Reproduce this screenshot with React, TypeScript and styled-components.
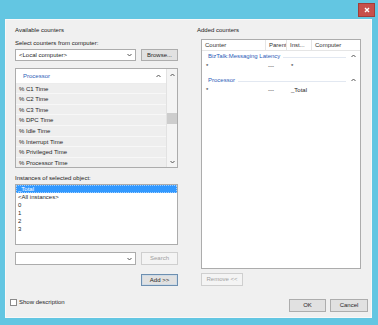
import styled, { createGlobalStyle, css } from 'styled-components'
import type { FC, ReactNode } from 'react'

const GlobalStyle = createGlobalStyle`
  html, body {
    margin: 0;
    padding: 0;
    background: #63c6e2;
  }
  body {
    font-family: "Liberation Sans", Arial, sans-serif;
    font-size: 6px;
    color: #1f1f1f;
  }
  * {
    box-sizing: border-box;
  }
`

const Window = styled.div`
  width: 378px;
  height: 325px;
  background: #63c6e2;
  display: flex;
  flex-direction: column;
  overflow: hidden;
`

const TitleBar = styled.div`
  height: 19px;
  display: flex;
  align-items: flex-start;
`

const Caption = styled.span<{ offset: number }>`
  margin-left: ${({ offset }) => offset}px;
  margin-top: -6px;
  font-size: 7px;
  line-height: 8px;
  color: #2e2e2e;
  white-space: nowrap;
`

const CloseButton = styled.div`
  margin: 3px 3px 0 auto;
  width: 17px;
  height: 14px;
  background: #c7504b;
  border: 1px solid #a23d39;
  display: flex;
  align-items: center;
  justify-content: center;
`

const Body = styled.div`
  height: 299px;
  margin: 0 6px 0 5px;
  background: #f0f0f0;
  box-shadow: inset 0 0 0 1px #f8f8f8;
  padding: 7px 4px 0 5px;
  display: flex;
  flex-direction: column;
`

const Main = styled.div`
  display: flex;
  gap: 19px;
  margin-left: 5px;
`

const Column = styled.div<{ width: number }>`
  width: ${({ width }) => width}px;
  display: flex;
  flex-direction: column;
`

const Label = styled.div<{ top?: number }>`
  margin-top: ${({ top = 0 }) => top}px;
  height: 8px;
  line-height: 8px;
  white-space: nowrap;
  color: #222;
`

const Row = styled.div<{ top?: number }>`
  display: flex;
  gap: 5px;
  margin-top: ${({ top = 0 }) => top}px;
`

const Combo = styled.div<{ height: number }>`
  width: 121px;
  height: ${({ height }) => height}px;
  border: 1px solid #acacac;
  background: #fff;
  display: flex;
  align-items: center;
  justify-content: space-between;
  padding: 0 3px 0 3px;
  white-space: nowrap;
`

const Button = styled.div<{
  width: number
  height: number
  variant?: 'normal' | 'disabled' | 'default'
}>`
  width: ${({ width }) => width}px;
  height: ${({ height }) => height}px;
  line-height: ${({ height }) => height - 2}px;
  text-align: center;
  white-space: nowrap;
  background: #e1e1e1;
  border: 1px solid #adadad;
  color: #1f1f1f;

  ${({ variant }) =>
    variant === 'disabled' &&
    css`
      background: #f4f4f4;
      border-color: #cfcfcf;
      color: #a0a0a0;
    `}

  ${({ variant }) =>
    variant === 'default' &&
    css`
      border-color: #6d8fb0;
      box-shadow: inset 0 0 0 1px #cfdbe6;
    `}
`

const CounterList = styled.div`
  margin-top: 7px;
  height: 100px;
  border: 1px solid #acacac;
  background: #fff;
  display: flex;
  overflow: hidden;
`

const ListArea = styled.div`
  flex: 1;
  display: flex;
  flex-direction: column;
  overflow: hidden;
`

const ObjectHeader = styled.div`
  flex: none;
  height: 14.5px;
  display: flex;
  align-items: center;
  padding: 0 5px 0 7px;
  color: #2b5cb8;
  border-bottom: 1px solid #ececec;
`

const Spacer = styled.div`
  flex: 1;
`

const CounterRow = styled.div`
  flex: none;
  height: 10.65px;
  line-height: 10.65px;
  padding-left: 3px;
  background: #eeeeee;
  box-shadow: inset 0 -1px 0 #f7f7f7;
  white-space: nowrap;
`

const Scrollbar = styled.div`
  width: 11px;
  border-left: 1px solid #e2e2e2;
  background: #f4f4f4;
  display: flex;
  flex-direction: column;
`

const ScrollArrow = styled.div`
  height: 11px;
  display: flex;
  align-items: center;
  justify-content: center;
`

const Track = styled.div`
  flex: 1;
`

const Thumb = styled.div`
  margin-top: 33px;
  height: 11px;
  background: #cdcdcd;
`

const InstanceBox = styled.div`
  margin-top: 2px;
  height: 61px;
  border: 1px solid #acacac;
  background: #fff;
  padding-top: 0;
`

const InstanceRow = styled.div<{ selected?: boolean }>`
  height: 8px;
  line-height: 8px;
  padding-left: 2px;
  white-space: nowrap;

  ${({ selected }) =>
    selected &&
    css`
      background: #3399ff;
      color: #fff;
      outline: 1px dotted #9fcfff;
      outline-offset: -1px;
    `}
`

const AddRow = styled.div`
  margin-top: 9px;
  display: flex;
  justify-content: flex-end;
`

const AddedBox = styled.div`
  margin: 5px 0 0 4px;
  width: 160px;
  height: 230px;
  border: 1px solid #acacac;
  background: #fff;
`

const Columns = styled.div`
  display: grid;
  grid-template-columns: 64px 21px 25px 1fr;
`

const HeaderRow = styled(Columns)`
  height: 11px;
  border-bottom: 1px solid #e5e5e5;
`

const HeaderCell = styled.div`
  line-height: 10px;
  padding-left: 3px;
  border-right: 1px solid #e5e5e5;
  white-space: nowrap;
  overflow: hidden;
  color: #333;

  &:last-child {
    border-right: none;
  }
`

const GroupHeader = styled.div<{ top?: number }>`
  margin-top: ${({ top = 0 }) => top}px;
  height: 10px;
  display: flex;
  align-items: center;
  padding: 0 4px 0 6px;
  color: #2b5cb8;
  white-space: nowrap;
`

const GroupLine = styled.div`
  flex: 1;
  height: 1px;
  margin: 3px 5px 0 3px;
  background: #e2e8f1;
`

const DataRow = styled(Columns)`
  height: 10px;
  line-height: 10px;
`

const Cell = styled.div<{ pad: number }>`
  padding-left: ${({ pad }) => pad}px;
  white-space: nowrap;
`

const RemoveRow = styled.div`
  margin: 4px 0 0 4px;
`

const BottomRow = styled.div`
  margin-top: 13px;
  display: flex;
  align-items: flex-start;
`

const CheckField = styled.label`
  display: flex;
  align-items: center;
  gap: 2px;
  height: 7px;
  line-height: 7px;
`

const CheckBox = styled.span`
  width: 7px;
  height: 7px;
  border: 1px solid #8a8a8a;
  background: #fff;
`

const DialogButtons = styled.div`
  margin-left: auto;
  display: flex;
  gap: 4px;
`

const Chevron: FC<{ up?: boolean }> = ({ up }) => (
  <svg width="5" height="4" viewBox="0 0 5 4">
    <polyline
      points={up ? '0.5,3 2.5,1 4.5,3' : '0.5,1 2.5,3 4.5,1'}
      fill="none"
      stroke="#555"
      strokeWidth="1"
    />
  </svg>
)

const CloseGlyph = () => (
  <svg width="6" height="6" viewBox="0 0 6 6">
    <path d="M1 1 L5 5 M5 1 L1 5" stroke="#fff" strokeWidth="1.4" />
  </svg>
)

const counters = [
  '% C1 Time',
  '% C2 Time',
  '% C3 Time',
  '% DPC Time',
  '% Idle Time',
  '% Interrupt Time',
  '% Privileged Time',
  '% Processor Time',
]

const instances = ['_Total', '<All instances>', '0', '1', '2', '3']

const added: Array<{ group: string; rows: Array<[string, string, string, string]> }> = [
  { group: 'BizTalk:Messaging Latency', rows: [['*', '---', '*', '']] },
  { group: 'Processor', rows: [['*', '---', '_Total', '']] },
]

const cellPads = [4, 2, 4, 3]

const DropCombo: FC<{ height: number; children?: ReactNode }> = ({ height, children }) => (
  <Combo height={height}>
    <span>{children}</span>
    <Chevron />
  </Combo>
)

export default function App() {
  return (
    <Window>
      <GlobalStyle />
      <TitleBar>
        <Caption offset={2}>Performance Monitor</Caption>
        <Caption offset={40}>Add Counters</Caption>
        <CloseButton>
          <CloseGlyph />
        </CloseButton>
      </TitleBar>

      <Body>
        <Main>
          <Column width={163}>
            <Label>Available counters</Label>
            <Label top={5}>Select counters from computer:</Label>
            <Row top={2}>
              <DropCombo height={12}>&lt;Local computer&gt;</DropCombo>
              <Button width={37} height={12}>
                Browse...
              </Button>
            </Row>

            <CounterList>
              <ListArea>
                <ObjectHeader>
                  Processor
                  <Spacer />
                  <Chevron up />
                </ObjectHeader>
                {counters.map((name) => (
                  <CounterRow key={name}>{name}</CounterRow>
                ))}
              </ListArea>
              <Scrollbar>
                <ScrollArrow>
                  <Chevron up />
                </ScrollArrow>
                <Track>
                  <Thumb />
                </Track>
                <ScrollArrow>
                  <Chevron />
                </ScrollArrow>
              </Scrollbar>
            </CounterList>

            <Label top={6}>Instances of selected object:</Label>
            <InstanceBox>
              {instances.map((name, i) => (
                <InstanceRow key={name} selected={i === 0}>
                  {name}
                </InstanceRow>
              ))}
            </InstanceBox>

            <Row top={7}>
              <DropCombo height={13} />
              <Button width={37} height={13} variant="disabled">
                Search
              </Button>
            </Row>

            <AddRow>
              <Button width={37} height={12} variant="default">
                Add &gt;&gt;
              </Button>
            </AddRow>
          </Column>

          <Column width={165}>
            <Label>Added counters</Label>
            <AddedBox>
              <HeaderRow>
                <HeaderCell>Counter</HeaderCell>
                <HeaderCell>Parent</HeaderCell>
                <HeaderCell>Inst...</HeaderCell>
                <HeaderCell>Computer</HeaderCell>
              </HeaderRow>
              {added.map(({ group, rows }, gi) => (
                <div key={group}>
                  <GroupHeader top={gi === 0 ? 0 : 4}>
                    {group}
                    <GroupLine />
                    <Chevron up />
                  </GroupHeader>
                  {rows.map((row, ri) => (
                    <DataRow key={ri}>
                      {row.map((value, ci) => (
                        <Cell key={ci} pad={cellPads[ci]}>
                          {value}
                        </Cell>
                      ))}
                    </DataRow>
                  ))}
                </div>
              ))}
            </AddedBox>
            <RemoveRow>
              <Button width={42} height={13} variant="disabled">
                Remove &lt;&lt;
              </Button>
            </RemoveRow>
          </Column>
        </Main>

        <BottomRow>
          <CheckField>
            <CheckBox />
            Show description
          </CheckField>
          <DialogButtons>
            <Button width={37} height={13}>
              OK
            </Button>
            <Button width={38} height={13}>
              Cancel
            </Button>
          </DialogButtons>
        </BottomRow>
      </Body>
    </Window>
  )
}
